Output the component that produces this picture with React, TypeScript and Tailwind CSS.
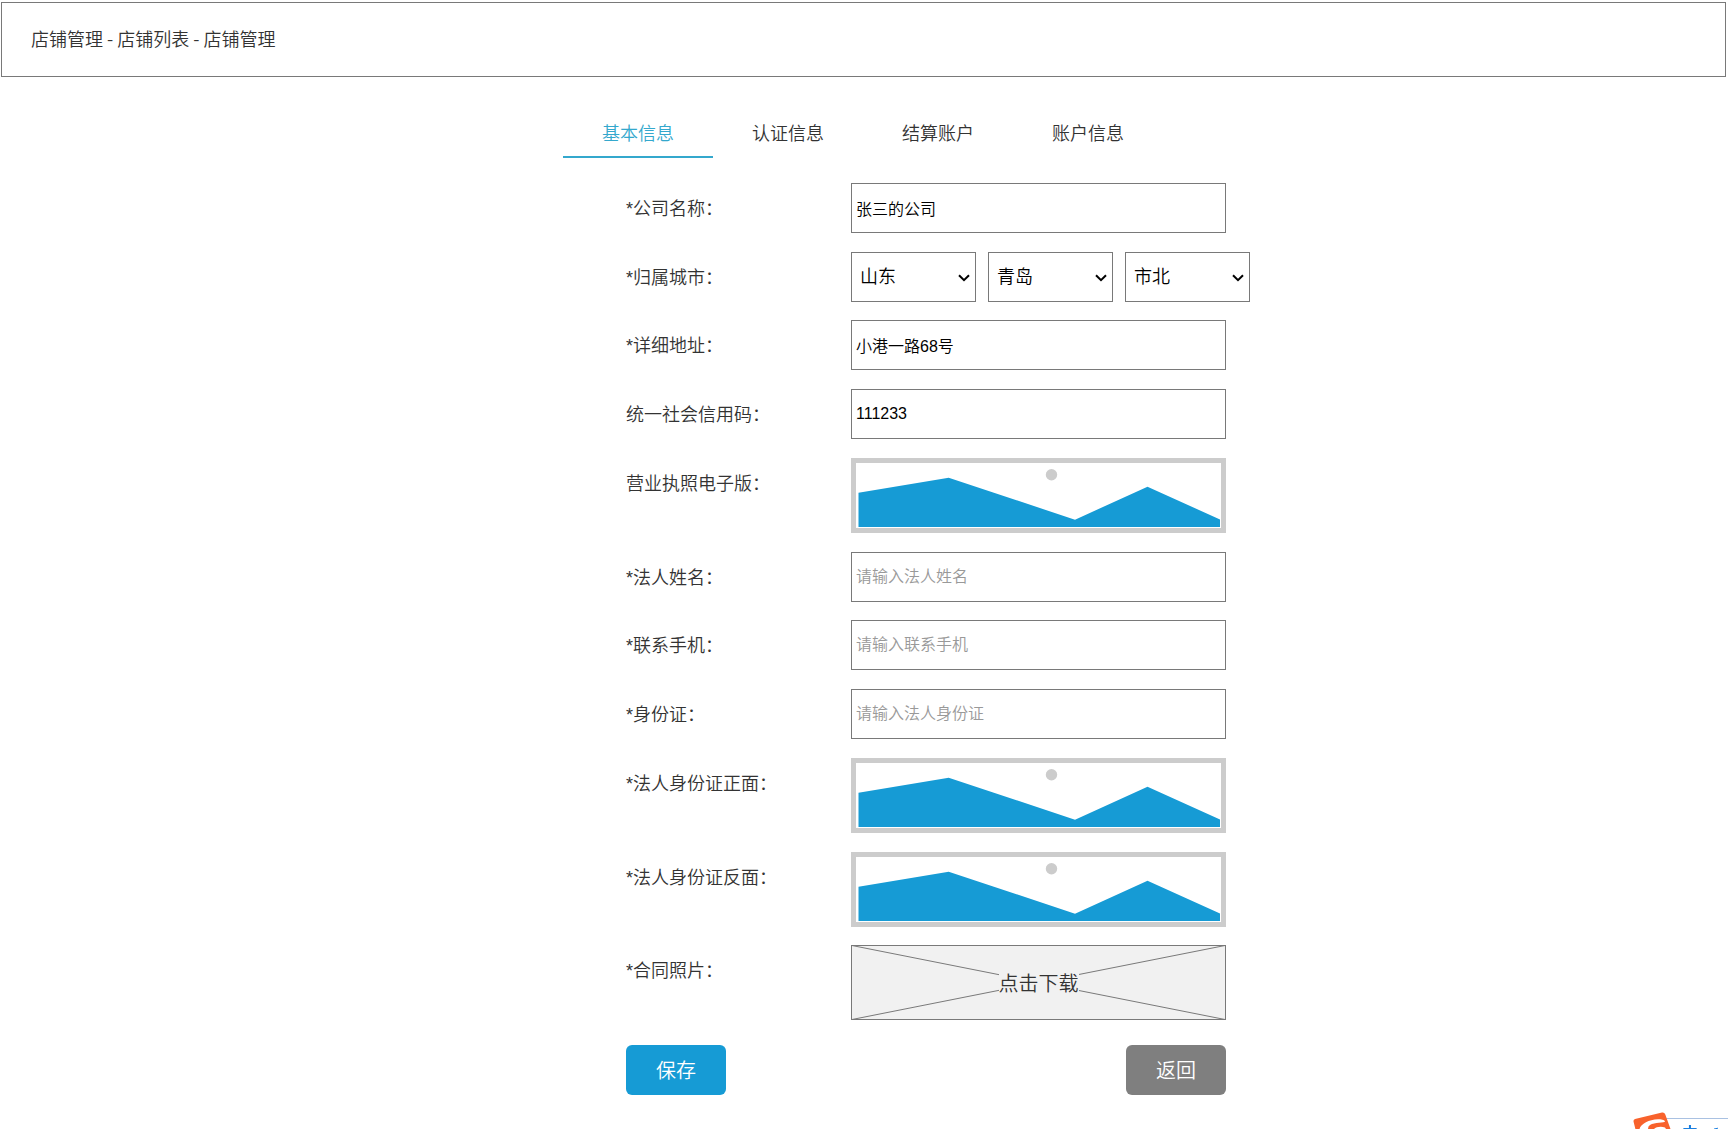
import { useState, type ReactNode } from 'react'

const TABS = ['基本信息', '认证信息', '结算账户', '账户信息']

function Row({ label, htmlFor, children }: { label: string; htmlFor?: string; children: ReactNode }) {
  return (
    <div className="grid grid-cols-[225px_1fr] items-start">
      <label htmlFor={htmlFor} className="pt-0.5 text-lg leading-12 text-[#333]">
        {label}
      </label>
      {children}
    </div>
  )
}

type TextFieldProps = { id: string; label: string; value?: string; placeholder?: string }

function TextField({ id, label, value = '', placeholder }: TextFieldProps) {
  return (
    <Row label={label} htmlFor={id}>
      <input
        id={id}
        type="text"
        defaultValue={value}
        placeholder={placeholder}
        className="h-[50px] w-[375px] border border-[#797979] bg-white px-1 text-base text-black placeholder:text-[#999]"
      />
    </Row>
  )
}

function CitySelect({ id, label, options }: { id?: string; label: string; options: string[] }) {
  return (
    <div className="relative">
      <select
        id={id}
        aria-label={label}
        className="h-[50px] w-[125px] appearance-none border border-[#797979] bg-white px-2 text-lg text-black"
      >
        {options.map((option) => (
          <option key={option}>{option}</option>
        ))}
      </select>
      <svg
        className="pointer-events-none absolute top-[22px] right-[6px]"
        width="12"
        height="8"
        viewBox="0 0 12 8"
        fill="none"
        stroke="#000"
        strokeWidth="2"
      >
        <path d="M1 1.2 6 6.2 11 1.2" />
      </svg>
    </div>
  )
}

function Picture({ label }: { label: string }) {
  return (
    <Row label={label}>
      <svg role="img" aria-label={label} width="375" height="75" viewBox="0 0 375 75">
        <rect x="2.5" y="2.5" width="370" height="70" fill="#fff" stroke="#ccc" strokeWidth="5" />
        <circle cx="200.5" cy="16.7" r="5.7" fill="#ccc" />
        <path d="M7.5 34.8 97.7 19.7 224 61.7 296.5 28.7 369 61.5V69H7.5Z" fill="#169bd5" />
      </svg>
    </Row>
  )
}

function ImeBar() {
  return (
    <div className="fixed right-0 bottom-0 h-[18px] w-24 overflow-hidden">
      <svg width="96" height="18" viewBox="0 0 96 18">
        <path d="M34 7.5H96" stroke="#a9c1e2" />
        <path d="M36 8H96V18H38Z" fill="#fff" />
        <path d="M3 8 30 1.6Q32.5 1.2 33.3 3.6L38.5 18H3.4L1.5 10.5Q1.2 8.6 3 8Z" fill="#f8622c" />
        <path d="M7.5 18C9 12.5 17 8.6 26 8.2 30 8 33 9 33 10.8 29 12.6 20 11 16.5 15.5L16 18Z" fill="#fff" />
        <path d="M22 18C24 15.8 29 15 33 16.4L34 18Z" fill="#fff" />
        <path d="M82 18 86 17.2" stroke="#1a7fe0" />
      </svg>
      <span className="absolute top-[13px] left-[50px] text-base leading-5 font-bold text-[#1a7fe0]">中</span>
    </div>
  )
}

export default function App() {
  const [tab, setTab] = useState(TABS[0])

  return (
    <div className="min-h-screen bg-white pt-0.5 pr-0.5 font-['Liberation_Sans','Noto_Sans_CJK_SC',sans-serif] font-[350] text-[#333]">
      <header className="ml-px flex h-[75px] items-center border border-[#797979] px-[29px] pb-1">
        <h1 className="font-['Noto_Sans_CJK_SC',sans-serif] text-lg">店铺管理 - 店铺列表 - 店铺管理</h1>
      </header>

      <main className="mx-auto w-[600px] pt-[31px]">
        <nav className="flex">
          {TABS.map((name) => (
            <button
              key={name}
              type="button"
              onClick={() => setTab(name)}
              className={
                name === tab
                  ? 'h-[50px] w-[150px] border-b-2 border-[#34a8cd] pt-1 text-lg text-[#34a8cd]'
                  : 'h-[50px] w-[150px] border-b-2 border-transparent pt-1 text-lg text-[#333]'
              }
            >
              {name}
            </button>
          ))}
        </nav>

        <form className="mt-[25px] ml-[63px] w-[625px]" onSubmit={(e) => e.preventDefault()}>
          <div className="flex flex-col gap-[18px]">
            <section className="flex flex-col gap-[19px]">
              <TextField id="company" label="*公司名称：" value="张三的公司" />
              <Row label="*归属城市：" htmlFor="province">
                <div className="flex gap-3">
                  <CitySelect id="province" label="省" options={['山东']} />
                  <CitySelect label="市" options={['青岛']} />
                  <CitySelect label="区" options={['市北']} />
                </div>
              </Row>
            </section>

            <section className="flex flex-col gap-[19px]">
              <TextField id="address" label="*详细地址：" value="小港一路68号" />
              <TextField id="credit-code" label="统一社会信用码：" value="111233" />
              <Picture label="营业执照电子版：" />
              <TextField id="legal-name" label="*法人姓名：" placeholder="请输入法人姓名" />
            </section>

            <section className="flex flex-col gap-[19px]">
              <TextField id="phone" label="*联系手机：" placeholder="请输入联系手机" />
              <TextField id="id-card" label="*身份证：" placeholder="请输入法人身份证" />
              <Picture label="*法人身份证正面：" />
              <Picture label="*法人身份证反面：" />
            </section>

            <Row label="*合同照片：" htmlFor="contract">
              <button
                id="contract"
                type="button"
                className="relative flex h-[75px] w-[375px] items-center justify-center bg-[#f1f1f1] pt-0.5 text-xl"
              >
                <svg className="absolute inset-0" width="375" height="75" viewBox="0 0 375 75" fill="none" stroke="#797979">
                  <rect x="0.5" y="0.5" width="374" height="74" />
                  <path d="M1 .5 374 74.5M1 74.5 374 .5" />
                </svg>
                <span className="relative bg-[#f1f1f1] leading-5">点击下载</span>
              </button>
            </Row>
          </div>

          <div className="mt-[25px] flex w-[600px] justify-between">
            <button type="submit" className="h-[50px] w-[100px] rounded-md bg-[#169bd5] pt-0.5 text-xl text-white">
              保存
            </button>
            <button type="button" className="h-[50px] w-[100px] rounded-md bg-[#7f7f7f] pt-0.5 text-xl text-white">
              返回
            </button>
          </div>
        </form>
      </main>

      <ImeBar />
    </div>
  )
}
